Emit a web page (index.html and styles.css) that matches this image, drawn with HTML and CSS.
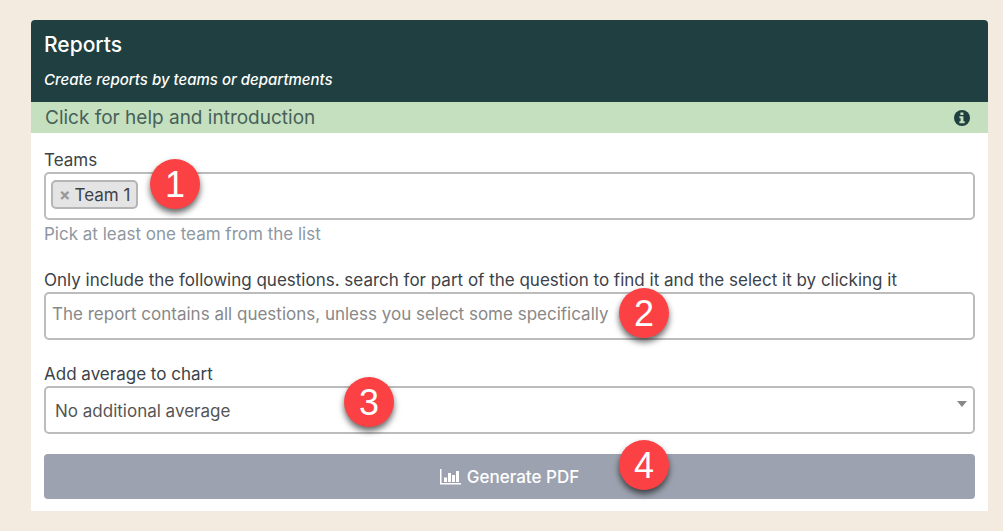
FILE: index.html
```html
<!DOCTYPE html>
<html lang="en">
<head>
<meta charset="utf-8">
<meta name="viewport" content="width=device-width, initial-scale=1">
<title>Reports</title>
<link rel="stylesheet" href="styles.css">
</head>
<body>
<main class="card">
  <header class="card-header">
    <h1 class="title">Reports</h1>
    <p class="subtitle">Create reports by teams or departments</p>
  </header>
  <button class="help-bar" type="button">
    <span>Click for help and introduction</span>
    <svg class="info-icon" viewBox="0 0 16 16" aria-hidden="true">
      <circle cx="8" cy="8" r="8" fill="#1f3f40"/>
      <path d="M6.4 2.4h3v2.6h-3zM5.4 6.2h4v5h1.3v2H5.4v-2h1.2v-3H5.4z" fill="#c5e0be"/>
    </svg>
  </button>
  <form class="form">
    <div class="field">
      <label class="label" for="teams">Teams</label>
      <div class="control tags">
        <span class="tag"><button class="tag-remove" type="button" aria-label="Remove Team 1">×</button>Team 1</span>
        <input class="tag-search" id="teams" type="text">
      </div>
      <p class="hint">Pick at least one team from the list</p>
      <span class="marker marker-1">1</span>
    </div>
    <div class="field">
      <label class="label" for="questions">Only include the following questions. search for part of the question to find it and the select it by clicking it</label>
      <input class="control questions" id="questions" type="text" placeholder="The report contains all questions, unless you select some specifically">
      <span class="marker marker-2">2</span>
    </div>
    <div class="field">
      <label class="label" for="average">Add average to chart</label>
      <div class="select-wrap">
        <select class="control average" id="average"><option>No additional average</option></select>
        <svg class="caret" viewBox="0 0 10 6" aria-hidden="true"><path d="M0 0h10L5 6z" fill="#888"/></svg>
      </div>
      <span class="marker marker-3">3</span>
    </div>
    <div class="field">
      <button class="submit" type="submit">
        <svg class="chart-icon" viewBox="0 0 21 16" aria-hidden="true">
          <path d="M0 0h1.500v14H21v1.500H0zM4 8.500h3v4.500H4zM8 4h3v9H8zM12 6h3v7h-3zM16 2h3v11h-3z" fill="#fff"/>
        </svg>
        <span>Generate PDF</span>
      </button>
      <span class="marker marker-4">4</span>
    </div>
  </form>
</main>
</body>
</html>
```
FILE: styles.css
```css
* {
  box-sizing: border-box;
}

body {
  margin: 0;
  padding: 20px 15px 20px 31px;
  background: #f3ebe0;
  color: #3c4248;
  font-family: Inter, "Liberation Sans", sans-serif;
  font-size: 17px;
  line-height: 24px;
}

button,
input,
select {
  font: inherit;
  color: inherit;
}

.card {
  background: #fff;
  border-radius: 4px 4px 0 0;
}

.card-header {
  padding: 13px 13px 10px;
  border-radius: 4px 4px 0 0;
  background: #1f3f40;
  color: #fff;
}

.title {
  margin: 0 0 11px;
  font-size: 21px;
  font-weight: 500;
  line-height: 24px;
}

.subtitle {
  margin: 0;
  font-size: 15px;
  font-style: italic;
  font-weight: 500;
  line-height: 24px;
}

.help-bar {
  display: flex;
  align-items: center;
  justify-content: space-between;
  width: 100%;
  height: 31px;
  padding: 1px 18px 0 14px;
  border: 0;
  background: #c5e0be;
  color: #47605a;
  font-size: 19px;
}

.info-icon {
  width: 16px;
  height: 16px;
}

.form {
  display: flex;
  flex-direction: column;
  gap: 22px;
  padding: 15px 13px 12px;
}

.field {
  position: relative;
}

.field:last-child {
  margin-top: -2px;
}

.label {
  display: block;
}

.control {
  display: block;
  width: 100%;
  height: 48px;
  border: 2px solid #bcbcbc;
  border-radius: 5px;
  background: #fff;
}

.tags {
  display: flex;
  align-items: flex-start;
  padding: 6px 5px;
}

.tag {
  display: flex;
  align-items: center;
  height: 29px;
  padding: 0 6px;
  border: 2px solid #b5b5b5;
  border-radius: 5px;
  background: #e4e4e4;
}

.tag-remove {
  padding: 0;
  margin-right: 4px;
  border: 0;
  background: none;
  color: #999;
  font-weight: 700;
}

.tag-search {
  flex: 1;
  min-width: 0;
  border: 0;
  outline: 0;
}

.hint {
  margin: 2px 0 0;
  color: #8e979f;
}

.questions {
  padding: 0 6px 4px;
}

.questions::placeholder {
  color: #888;
  opacity: 1;
}

.select-wrap {
  position: relative;
}

.average {
  appearance: none;
  padding: 2px 28px 0 9px;
  color: #555;
}

.caret {
  position: absolute;
  top: 15px;
  right: 8px;
  width: 10px;
  height: 6px;
  pointer-events: none;
}

.submit {
  display: flex;
  align-items: center;
  justify-content: center;
  gap: 6px;
  width: 100%;
  height: 45px;
  padding: 0;
  border: 0;
  border-radius: 4px;
  background: #9ca2af;
  color: #fff;
  font-weight: 500;
}

.chart-icon {
  width: 21px;
  height: 16px;
}

.marker {
  position: absolute;
  width: 50px;
  height: 50px;
  border-radius: 50%;
  background: #fc4144;
  box-shadow: 0 4px 6px rgba(0, 0, 0, 0.6);
  color: #fff;
  font-family: "Liberation Sans", Arial, sans-serif;
  font-size: 36px;
  line-height: 52px;
  text-align: center;
}

.marker-1 {
  top: 11px;
  left: 106px;
}

.marker-2 {
  top: 20px;
  left: 575px;
}

.marker-3 {
  top: 15px;
  left: 300px;
}

.marker-4 {
  top: -14px;
  left: 575px;
}
```
